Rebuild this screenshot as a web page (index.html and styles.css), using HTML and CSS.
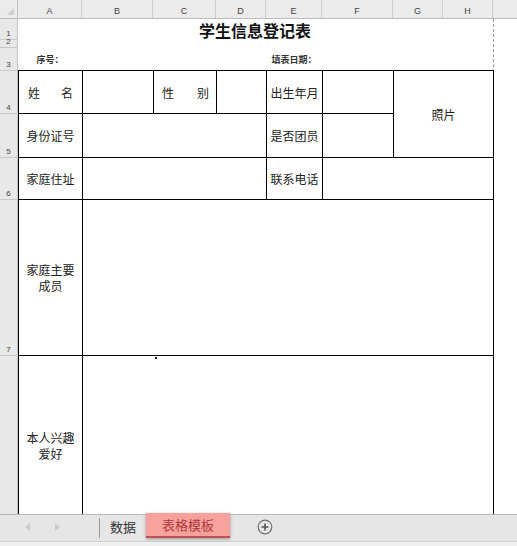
FILE: index.html
```html
<!DOCTYPE html>
<html lang="zh-CN">
<head>
<meta charset="utf-8">
<title>学生信息登记表</title>
<link rel="stylesheet" href="styles.css">
</head>
<body>
<div class="app">
  <div class="colhead">
    <div class="corner"><span class="corner-tri"></span></div>
    <div class="ch w64">A</div>
    <div class="ch w71">B</div>
    <div class="ch w63">C</div>
    <div class="ch w50">D</div>
    <div class="ch w56">E</div>
    <div class="ch w71">F</div>
    <div class="ch w50">G</div>
    <div class="ch w50">H</div>
    <div class="ch rest"></div>
  </div>
  <div class="sheet">
    <div class="rowhead">
      <div class="rh r1">1</div>
      <div class="rh r2">2</div>
      <div class="rh r3">3</div>
      <div class="rh r4">4</div>
      <div class="rh r5">5</div>
      <div class="rh r6">6</div>
      <div class="rh r7">7</div>
      <div class="rh r8"></div>
    </div>
    <div class="page">
      <div class="title">学生信息登记表</div>
      <div class="info">
        <span class="serial">序号：</span>
        <span class="date">填表日期：</span>
      </div>
      <div class="form">
        <div class="cell spread name">
          <span>姓</span><span>名</span>
        </div>
        <div class="cell"></div>
        <div class="cell spread sex">
          <span>性</span><span>别</span>
        </div>
        <div class="cell"></div>
        <div class="cell">出生年月</div>
        <div class="cell"></div>
        <div class="cell photo">照片</div>

        <div class="cell">身份证号</div>
        <div class="cell span-bd"></div>
        <div class="cell">是否团员</div>
        <div class="cell"></div>

        <div class="cell">家庭住址</div>
        <div class="cell span-bd"></div>
        <div class="cell">联系电话</div>
        <div class="cell span-fh"></div>

        <div class="cell multi">家庭主要<br>成员</div>
        <div class="cell span-bh"></div>

        <div class="cell multi">本人兴趣<br>爱好</div>
        <div class="cell span-bh"><span class="dot"></span></div>
      </div>
    </div>
    <div class="margin"></div>
  </div>
  <div class="tabs">
    <div class="nav">
      <svg class="arrow left" width="6" height="8" viewBox="0 0 6 8"><path d="M5 0 L0 4 L5 8 Z" fill="#c9c9c9"/></svg>
      <svg class="arrow right" width="6" height="8" viewBox="0 0 6 8"><path d="M1 0 L6 4 L1 8 Z" fill="#c9c9c9"/></svg>
    </div>
    <div class="sep"></div>
    <div class="tab">数据</div>
    <div class="tab active">表格模板</div>
    <svg class="plus" width="16" height="16" viewBox="0 0 16 16">
      <circle cx="8" cy="8" r="6.8" fill="none" stroke="#6d6d6d" stroke-width="1.2"/>
      <path d="M8 4.5 V11.5 M4.5 8 H11.5" stroke="#555" stroke-width="1.6"/>
    </svg>
  </div>
</div>
</body>
</html>
```

FILE: styles.css
```css
* { box-sizing: border-box; }

html, body {
  margin: 0;
  padding: 0;
  background: #ffffff;
}

body {
  font-family: "Noto Sans CJK SC", "Noto Sans", sans-serif;
  color: #222;
}

.app {
  width: 517px;
  height: 546px;
  overflow: hidden;
  display: flex;
  flex-direction: column;
}

/* column header */
.colhead {
  display: flex;
  height: 19px;
  flex: none;
  background: #ebebeb;
  border-bottom: 1px solid #bdbdbd;
}

.corner {
  width: 18px;
  border-right: 1px solid #c4c4c4;
  position: relative;
}

.corner-tri {
  position: absolute;
  right: 3px;
  bottom: 3px;
  width: 0;
  height: 0;
  border-left: 7px solid transparent;
  border-bottom: 7px solid #cfcfcf;
}

.ch {
  border-right: 1px solid #cdcdcd;
  font-family: "Liberation Sans", Arial, sans-serif;
  font-size: 9px;
  color: #444;
  text-align: center;
  line-height: 12px;
  padding-top: 5px;
}

.w64 { width: 64px; }
.w71 { width: 71px; }
.w63 { width: 63px; }
.w50 { width: 50px; }
.w56 { width: 56px; }
.ch.rest { flex: 1; border-right: none; }

/* sheet body */
.sheet {
  display: flex;
  height: 495px;
  flex: none;
  overflow: hidden;
}

.rowhead {
  width: 18px;
  flex: none;
  background: #e8e8e8;
  border-right: 1px solid #c4c4c4;
  display: flex;
  flex-direction: column;
}

.rh {
  border-bottom: 1px solid #c9c9c9;
  font-family: "Liberation Sans", Arial, sans-serif;
  font-size: 8px;
  color: #444;
  text-align: center;
  display: flex;
  align-items: flex-end;
  justify-content: center;
  line-height: 9px;
  padding-bottom: 1px;
  flex: none;
}

.r1 { height: 21px; }
.r2 { height: 8px; }
.r3 { height: 23px; }
.r4 { height: 43px; }
.r5 { height: 44px; }
.r6 { height: 42px; }
.r7 { height: 156px; }
.r8 { height: 181px; }

.page {
  width: 476px;
  flex: none;
  border-right: 1px dashed #9a9a9a;
  display: flex;
  flex-direction: column;
}

.title {
  flex: none;
  height: 29px;
  line-height: 22px;
  text-align: center;
  font-size: 16px;
  font-weight: bold;
  color: #111;
  padding-right: 1px;
}

.info {
  flex: none;
  height: 22px;
  display: grid;
  grid-template-columns: 64px 184px 56px 1fr;
  align-items: center;
  font-size: 9px;
  font-weight: bold;
  color: #333;
}

.serial {
  grid-column: 1;
  text-align: center;
}

.date {
  grid-column: 3;
  text-align: center;
  white-space: nowrap;
}

.form {
  flex: none;
  width: 476px;
  display: grid;
  grid-template-columns: 63px 70px 62px 49px 55px 70px 49px 49px;
  grid-template-rows: 42px 43px 41px 155px 180px;
  gap: 1px;
  padding: 1px;
  background: #000;
}

.cell {
  background: #fff;
  display: flex;
  align-items: center;
  justify-content: center;
  font-size: 12px;
  color: #222;
  white-space: nowrap;
}

.cell.spread { justify-content: space-between; }
.cell.name { padding: 0 9px 0 9px; }
.cell.sex { padding: 0 7px 0 8px; }

.photo {
  grid-column: 7 / span 2;
  grid-row: 1 / span 2;
}

.span-bd { grid-column: 2 / span 3; }
.span-fh { grid-column: 6 / span 3; }
.span-bh { grid-column: 2 / span 7; }

.span-bh:last-child {
  align-items: flex-start;
  justify-content: flex-start;
}

.dot {
  width: 2px;
  height: 2px;
  background: #222;
  margin: 1px 0 0 72px;
}

.multi {
  text-align: center;
  line-height: 16px;
}

.margin {
  flex: 1;
  background: #fff;
}

/* sheet tabs */
.tabs {
  flex: none;
  height: 32px;
  background: #e6e6e6;
  border-top: 1px solid #b9b9b9;
  display: flex;
  align-items: flex-start;
  position: relative;
}

.tabs::after {
  content: "";
  position: absolute;
  left: 0;
  right: 0;
  bottom: 0;
  height: 4px;
  background: #f0f0f0;
  border-top: 1px solid #d2d2d2;
}

.nav {
  width: 99px;
  height: 24px;
  display: flex;
  align-items: center;
  padding-left: 25px;
  gap: 23px;
}

.sep {
  width: 1px;
  height: 20px;
  margin-top: 3px;
  background: #9c9c9c;
}

.tab {
  font-size: 13px;
  line-height: 24px;
  height: 24px;
  color: #333;
  margin-left: 10px;
  white-space: nowrap;
}

.tab.active {
  margin-left: 10px;
  margin-top: -2px;
  height: 25px;
  line-height: 22px;
  padding: 1px 16px 0 16px;
  background: #f8a29e;
  color: #b0393a;
  border-bottom: 2px solid #c25250;
  box-shadow: 0 1px 3px rgba(0, 0, 0, 0.35);
  position: relative;
  z-index: 1;
}

.plus {
  margin-left: 27px;
  margin-top: 4px;
}
```
